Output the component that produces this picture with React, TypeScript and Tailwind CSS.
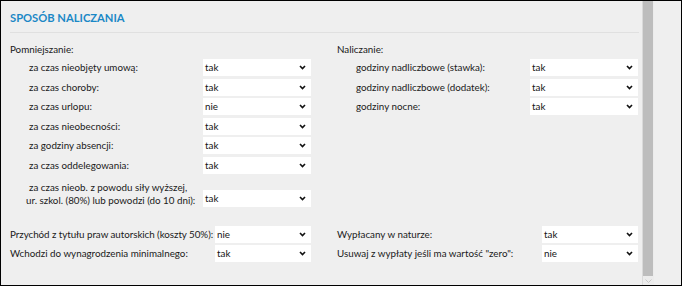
import React from "react";

const Chevron = () => (
  <svg width="7" height="5" viewBox="0 0 7 5" className="block">
    <path d="M1 1 L3.5 3.6 L6 1" fill="none" stroke="#111" strokeWidth="1.6" />
  </svg>
);

const Sel = ({ value, w }: { value: string; w: string }) => (
  <div className={`${w} h-[17px] bg-white flex items-center justify-between pl-[2px] pr-[5px] text-[#141414]`}>
    <span className="leading-[17px]">{value}</span>
    <Chevron />
  </div>
);

const Row = ({ label, value, lw }: { label: string; value: string; lw: string }) => (
  <div className="flex h-[17px] items-center">
    <div className={`${lw} shrink-0 leading-[17px] whitespace-nowrap`}>{label}</div>
    <Sel value={value} w="w-[108px]" />
  </div>
);

export default function App() {
  return (
    <div
      className="w-[682px] h-[286px] border border-black bg-[#efefef] flex text-[9.8px] text-[#1a1a1a] overflow-hidden"
      style={{ fontFamily: 'Lato, "Open Sans", sans-serif' }}
    >
      <div className="w-[641px] shrink-0 pl-[9px] pr-[3px]">
        <div className="pt-[7px] h-[27px] leading-[20px] text-[11.2px] font-bold text-[#1b88c6]">SPOSÓB NALICZANIA</div>
        <div className="mt-[4px] h-[1px] bg-[#e0e0e0]" />
        <div className="flex mt-[8px]">
          <div className="w-[327px] shrink-0">
            <div className="h-[16px] leading-[16px]">Pomniejszanie:</div>
            <div className="mt-[2px] pl-[19px] flex flex-col gap-[2.5px]">
              <Row label="za czas nieobjęty umową:" value="tak" lw="w-[174px]" />
              <Row label="za czas choroby:" value="tak" lw="w-[174px]" />
              <Row label="za czas urlopu:" value="nie" lw="w-[174px]" />
              <Row label="za czas nieobecności:" value="tak" lw="w-[174px]" />
              <Row label="za godziny absencji:" value="tak" lw="w-[174px]" />
              <Row label="za czas oddelegowania:" value="tak" lw="w-[174px]" />
            </div>
            <div className="mt-[7px] flex items-end h-[26px] pl-[16px]">
              <div className="w-[177px] shrink-0 leading-[13px] whitespace-nowrap">
                <div className="pl-[3px]">za czas nieob. z powodu siły wyższej,</div>
                <div>ur. szkol. (80%) lub powodzi (do 10 dni):</div>
              </div>
              <Sel value="tak" w="w-[108px]" />
            </div>
          </div>
          <div className="flex-1">
            <div className="h-[16px] leading-[16px]">Naliczanie:</div>
            <div className="mt-[2px] pl-[19px] flex flex-col gap-[2.5px]">
              <Row label="godziny nadliczbowe (stawka):" value="tak" lw="w-[174px]" />
              <Row label="godziny nadliczbowe (dodatek):" value="tak" lw="w-[174px]" />
              <Row label="godziny nocne:" value="tak" lw="w-[174px]" />
            </div>
          </div>
        </div>
        <div className="mt-[19px] grid grid-cols-[327px_1fr] gap-y-[2.5px]">
          <div className="flex h-[17px] items-center">
            <div className="w-[205px] shrink-0 whitespace-nowrap tracking-[-0.05px]">Przychód z tytułu praw autorskich (koszty 50%):</div>
            <Sel value="nie" w="w-[96px]" />
          </div>
          <div className="flex h-[17px] items-center">
            <div className="w-[205px] shrink-0 whitespace-nowrap">Wypłacany w naturze:</div>
            <Sel value="tak" w="w-[96px]" />
          </div>
          <div className="flex h-[17px] items-center">
            <div className="w-[205px] shrink-0 whitespace-nowrap">Wchodzi do wynagrodzenia minimalnego:</div>
            <Sel value="tak" w="w-[96px]" />
          </div>
          <div className="flex h-[17px] items-center">
            <div className="w-[205px] shrink-0 whitespace-nowrap">Usuwaj z wypłaty jeśli ma wartość "zero":</div>
            <Sel value="nie" w="w-[96px]" />
          </div>
        </div>
      </div>
      <div className="w-[12px] shrink-0 flex flex-col bg-[#ececec]">
        <div className="flex h-full">
          <div className="w-[1px] bg-[#dadada]" />
          <div className="w-[10px] flex flex-col">
            <div className="h-[275px] bg-[#bdbdbd]" />
            <div className="flex-1 flex items-center justify-center">
              <svg width="7" height="4" viewBox="0 0 7 4">
                <path d="M0.5 0.5 L3.5 3.5 L6.5 0.5" fill="none" stroke="#c8c8c8" strokeWidth="1" />
              </svg>
            </div>
          </div>
        </div>
      </div>
      <div className="flex-1 bg-[#efefef]" />
    </div>
  );
}
